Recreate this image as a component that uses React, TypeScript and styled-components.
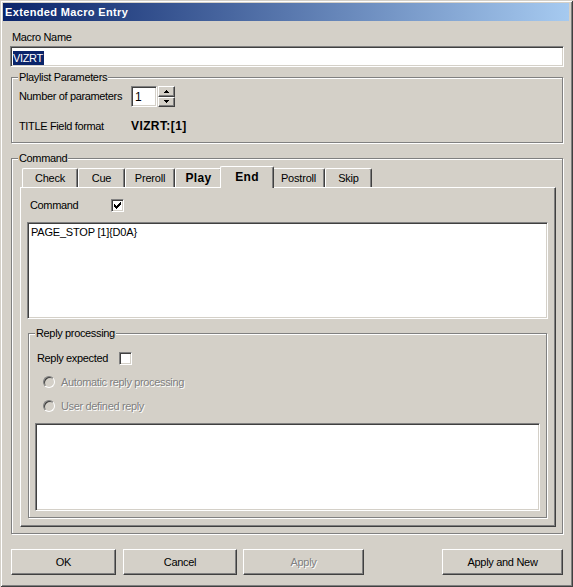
import React from 'react';
import styled, { createGlobalStyle, css } from 'styled-components';

const GlobalStyle = createGlobalStyle`
  html, body {
    margin: 0;
    padding: 0;
    background: #d4d0c8;
  }
  body {
    font-family: 'Liberation Sans', Arial, sans-serif;
    font-size: 11px;
    color: #000;
  }
`;

// 3D edges used all over a classic dialog
const raised = css`
  border-top: 1px solid #ffffff;
  border-left: 1px solid #ffffff;
  border-right: 1px solid #404040;
  border-bottom: 1px solid #404040;
  box-shadow: inset -1px -1px 0 #808080;
`;

const sunken = css`
  border-top: 1px solid #808080;
  border-left: 1px solid #808080;
  border-right: 1px solid #ffffff;
  border-bottom: 1px solid #ffffff;
  box-shadow: inset 1px 1px 0 #404040, inset -1px -1px 0 #d4d0c8;
  background: #ffffff;
`;

const Window = styled.div`
  width: 573px;
  height: 587px;
  box-sizing: border-box;
  background: #d4d0c8;
  padding: 3px 4px 3px 3px;
  box-shadow: inset 1px 1px 0 #d4d0c8, inset -1px -1px 0 #404040, inset 2px 2px 0 #ffffff,
    inset -2px -2px 0 #808080;
  display: flex;
  flex-direction: column;
`;

const TitleBar = styled.div`
  height: 18px;
  line-height: 18px;
  padding-left: 2px;
  background: linear-gradient(to right, #0a246a, #a6caf0);
  color: #ffffff;
  font-weight: bold;
  font-size: 11px;
  letter-spacing: 0.35px;
`;

const Body = styled.div`
  flex: 1;
  display: flex;
  flex-direction: column;
  padding: 0 5px 0 7px;
`;

const Text = styled.span<{ $bold?: boolean; $disabled?: boolean }>`
  line-height: 13px;
  letter-spacing: ${(p) => (p.$bold ? '0.4px' : '-0.35px')};
  font-weight: ${(p) => (p.$bold ? 'bold' : 'normal')};
  font-size: ${(p) => (p.$bold ? '12px' : '11px')};
  color: ${(p) => (p.$disabled ? '#808080' : '#000')};
  text-shadow: ${(p) => (p.$disabled ? '1px 1px 0 #ffffff' : 'none')};
  white-space: nowrap;
`;

const TopLabel = styled(Text)`
  display: block;
  margin: 10px 0 0 2px;
`;

const EditField = styled.div`
  ${sunken};
  box-sizing: border-box;
  margin-top: 2px;
  height: 21px;
  padding: 2px 2px 0;
  display: flex;
  align-items: center;
`;

const Selected = styled.span`
  background: #0a246a;
  color: #ffffff;
  line-height: 14px;
  letter-spacing: -0.35px;
  padding-right: 1px;
`;

const GroupBox = styled.div<{ $h: number }>`
  position: relative;
  box-sizing: border-box;
  height: ${(p) => p.$h}px;
  border: 1px solid #808080;
  box-shadow: inset 1px 1px 0 #ffffff, 1px 1px 0 #ffffff;
  display: flex;
  flex-direction: column;
`;

const GroupLabel = styled(Text)`
  position: absolute;
  top: -7px;
  left: 6px;
  padding: 0 1px;
  background: #d4d0c8;
`;

const PlaylistGroup = styled(GroupBox)`
  margin: 10px 1px 0 1px;
  padding: 8px 0 0 7px;
`;

const Row = styled.div`
  display: flex;
  align-items: center;
`;

const FieldLabel = styled(Text)<{ $w: number }>`
  width: ${(p) => p.$w}px;
`;

const Spin = styled.div`
  display: flex;
  height: 21px;
`;

const SpinEdit = styled.div`
  ${sunken};
  box-sizing: border-box;
  width: 26px;
  height: 21px;
  padding: 3px 0 0 3px;
  font-size: 12px;
  line-height: 14px;
`;

const SpinButtons = styled.div`
  display: flex;
  flex-direction: column;
  width: 17px;
  margin-left: 1px;
`;

const SpinButton = styled.div`
  ${raised};
  box-sizing: border-box;
  flex: 1;
  background: #d4d0c8;
  display: flex;
  align-items: center;
  justify-content: center;
`;

const FormatRow = styled(Row)`
  margin-top: 13px;
`;

const CommandGroup = styled(GroupBox)`
  margin: 15px 1px 0 1px;
  padding: 7px 6px 6px 8px;
`;

const TabStrip = styled.div`
  height: 21px;
  display: flex;
  align-items: flex-end;
  padding-left: 2px;
`;

const Tab = styled.div<{ $w: number; $active?: boolean; $bold?: boolean }>`
  box-sizing: border-box;
  width: ${(p) => p.$w}px;
  height: ${(p) => (p.$active ? 22 : 19)}px;
  margin: ${(p) => (p.$active ? '0 -2px -1px' : '0')};
  position: relative;
  z-index: ${(p) => (p.$active ? 2 : 1)};
  background: #d4d0c8;
  border-top: 1px solid #ffffff;
  border-left: 1px solid #ffffff;
  border-right: 1px solid #404040;
  border-radius: 2px 2px 0 0;
  box-shadow: inset -1px 0 0 #808080;
  display: flex;
  align-items: center;
  justify-content: center;
  padding-bottom: ${(p) => (p.$active ? 2 : 0)}px;
  font-weight: ${(p) => (p.$bold ? 'bold' : 'normal')};
  font-size: ${(p) => (p.$bold ? '12px' : '11px')};
  letter-spacing: ${(p) => (p.$bold ? '0.3px' : '-0.2px')};
`;

const TabPanel = styled.div`
  ${raised};
  flex: 1;
  background: #d4d0c8;
  display: flex;
  flex-direction: column;
`;

const CheckRow = styled(Row)<{ $top: number; $left: number }>`
  margin: ${(p) => p.$top}px 0 0 ${(p) => p.$left}px;
  height: 13px;
`;

const CheckBox = styled.div`
  ${sunken};
  box-sizing: border-box;
  width: 13px;
  height: 13px;
  display: flex;
  align-items: center;
  justify-content: center;
`;

const Memo = styled.div<{ $h: number }>`
  ${sunken};
  box-sizing: border-box;
  height: ${(p) => p.$h}px;
  padding: 2px 3px;
  line-height: 14px;
  letter-spacing: -0.2px;
`;

const CommandMemo = styled(Memo)`
  margin: 10px 7px 0 6px;
`;

const ReplyGroup = styled(GroupBox)`
  margin: 14px 8px 0 7px;
`;

const RadioRow = styled(Row)<{ $top: number }>`
  margin: ${(p) => p.$top}px 0 0 14px;
  height: 12px;
  gap: 6px;
`;

const Radio = styled.div`
  box-sizing: border-box;
  width: 12px;
  height: 12px;
  border-radius: 50%;
  border: 1px solid;
  border-color: #808080 #ffffff #ffffff #808080;
  box-shadow: inset 1px 1px 0 #404040;
  background: #d4d0c8;
`;

const ReplyMemo = styled(Memo)`
  margin: 11px 6px 0 6px;
`;

const ButtonRow = styled.div`
  display: flex;
  margin: 15px 1px 0 1px;
  height: 26px;
`;

const Button = styled.div<{ $w: number; $gap: number; $disabled?: boolean }>`
  ${raised};
  box-shadow: inset -1px -1px 0 #808080, inset 1px 1px 0 #d4d0c8;
  box-sizing: border-box;
  width: ${(p) => p.$w}px;
  margin-left: ${(p) => p.$gap}px;
  background: #d4d0c8;
  display: flex;
  align-items: center;
  justify-content: center;
  letter-spacing: -0.3px;
  color: ${(p) => (p.$disabled ? '#808080' : '#000')};
  text-shadow: ${(p) => (p.$disabled ? '1px 1px 0 #ffffff' : 'none')};
`;

const Spacer = styled.div`
  flex: 1;
`;

function Arrow({ up }: { up?: boolean }) {
  return (
    <svg width="5" height="3" viewBox="0 0 5 3" shapeRendering="crispEdges">
      <path d={up ? 'M2 0h1v1h1v1h1v1H0V2h1V1h1z' : 'M0 0h5v1H4v1H3v1H2V2H1V1H0z'} fill="#000" />
    </svg>
  );
}

function Check() {
  return (
    <svg width="7" height="7" viewBox="0 0 7 7" shapeRendering="crispEdges">
      <path
        d="M6 0h1v3H6v1H5v1H4v1H3v1H2V6H1V5H0V2h1v1h1v1h1V3h1V2h1V1h1z"
        fill="#000"
      />
    </svg>
  );
}

const tabs = [
  { name: 'Check', w: 56 },
  { name: 'Cue', w: 47 },
  { name: 'Preroll', w: 50 },
  { name: 'Play', w: 47, bold: true },
  { name: 'End', w: 54, bold: true, active: true },
  { name: 'Postroll', w: 53 },
  { name: 'Skip', w: 47 },
];

export default function App() {
  return (
    <>
      <GlobalStyle />
      <Window>
        <TitleBar>Extended Macro Entry</TitleBar>
        <Body>
          <TopLabel>Macro Name</TopLabel>
          <EditField>
            <Selected>VIZRT</Selected>
          </EditField>

          <PlaylistGroup $h={66}>
            <GroupLabel>Playlist Parameters</GroupLabel>
            <Row>
              <FieldLabel $w={112}>Number of parameters</FieldLabel>
              <Spin>
                <SpinEdit>1</SpinEdit>
                <SpinButtons>
                  <SpinButton>
                    <Arrow up />
                  </SpinButton>
                  <SpinButton>
                    <Arrow />
                  </SpinButton>
                </SpinButtons>
              </Spin>
            </Row>
            <FormatRow>
              <FieldLabel $w={112}>TITLE Field format</FieldLabel>
              <Text $bold>VIZRT:[1]</Text>
            </FormatRow>
          </PlaylistGroup>

          <CommandGroup $h={376}>
            <GroupLabel>Command</GroupLabel>
            <TabStrip>
              {tabs.map((t) => (
                <Tab key={t.name} $w={t.w} $active={t.active} $bold={t.bold}>
                  {t.name}
                </Tab>
              ))}
            </TabStrip>
            <TabPanel>
              <CheckRow $top={11} $left={9}>
                <FieldLabel $w={81}>Command</FieldLabel>
                <CheckBox>
                  <Check />
                </CheckBox>
              </CheckRow>
              <CommandMemo $h={97}>PAGE_STOP [1]{'{D0A}'}</CommandMemo>
              <ReplyGroup $h={185}>
                <GroupLabel>Reply processing</GroupLabel>
                <CheckRow $top={18} $left={8}>
                  <FieldLabel $w={82}>Reply expected</FieldLabel>
                  <CheckBox />
                </CheckRow>
                <RadioRow $top={11}>
                  <Radio />
                  <Text $disabled>Automatic reply processing</Text>
                </RadioRow>
                <RadioRow $top={12}>
                  <Radio />
                  <Text $disabled>User defined reply</Text>
                </RadioRow>
                <ReplyMemo $h={88} />
              </ReplyGroup>
            </TabPanel>
          </CommandGroup>

          <ButtonRow>
            <Button $w={105} $gap={0}>OK</Button>
            <Button $w={114} $gap={7}>Cancel</Button>
            <Button $w={121} $gap={6} $disabled>
              Apply
            </Button>
            <Spacer />
            <Button $w={121} $gap={0}>Apply and New</Button>
          </ButtonRow>
        </Body>
      </Window>
    </>
  );
}
